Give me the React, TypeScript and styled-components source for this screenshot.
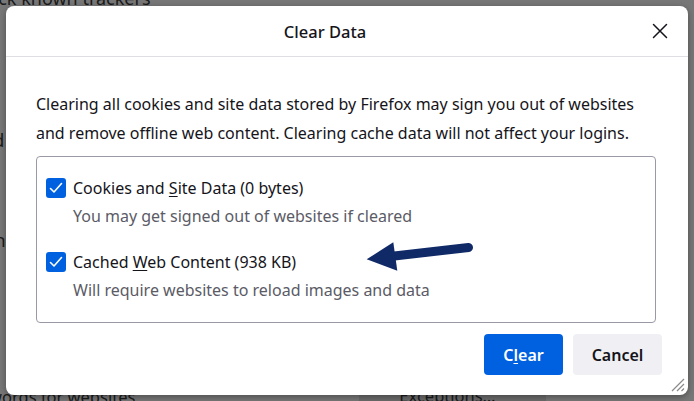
import React from "react";
import styled, { createGlobalStyle } from "styled-components";

const GlobalStyle = createGlobalStyle`
  html, body {
    margin: 0;
    padding: 0;
    width: 694px;
    height: 401px;
    overflow: hidden;
    font-family: "Noto Sans", "Open Sans", Arial, sans-serif;
  }
`;

const Page = styled.div`
  position: relative;
  width: 694px;
  height: 401px;
  overflow: hidden;
  background: #777777;
  color: #1a1a1a;
  font-size: 18px;
`;

const PageContent = styled.div`
  display: flex;
  flex-direction: column;
  margin: -14px 0 0 -29px;
  height: 425px;
`;

const PageLine = styled.div<{ $mt?: number; $ml?: number }>`
  margin-top: ${({ $mt }) => $mt ?? 0}px;
  margin-left: ${({ $ml }) => $ml ?? 0}px;
  line-height: 24px;
`;

const BottomRow = styled.div`
  display: flex;
  align-items: center;
  margin-top: auto;
  margin-left: -17px;
  font-size: 16.5px;
`;

const BottomButton = styled.div`
  margin-left: 224px;
  padding: 0 50px 0 40px;
  background: #6b6b6b;
  line-height: 30px;
`;

const Overlay = styled.div`
  position: absolute;
  inset: 0;
  display: flex;
  align-items: flex-start;
  padding: 6px;
`;

const Dialog = styled.div`
  position: relative;
  width: 682px;
  height: 389px;
  background: #ffffff;
  border-radius: 8px;
  box-shadow: 0 2px 6px rgba(0, 0, 0, 0.35);
  display: flex;
  flex-direction: column;
  color: #15141a;
  font-size: 16px;
`;

const Header = styled.div`
  display: flex;
  align-items: center;
  height: 50px;
  border-bottom: 1px solid #dedee3;
  flex-shrink: 0;
`;

const Title = styled.div`
  flex: 1;
  text-align: center;
  font-weight: 500;
  font-size: 16.5px;
`;

const CloseButton = styled.div`
  width: 32px;
  height: 32px;
  margin-right: 12px;
  display: flex;
  align-items: center;
  justify-content: center;
  color: #15141a;
`;

const Body = styled.div`
  padding: 33px 32px 0 30px;
  display: flex;
  flex-direction: column;
`;

const Intro = styled.p`
  margin: 0;
  line-height: 29px;
`;

const OptionsBox = styled.div`
  margin-top: 8px;
  border: 1px solid #9a9aa6;
  border-radius: 4px;
  height: 167px;
  box-sizing: border-box;
  padding: 21px 10px 0 9px;
  display: flex;
  flex-direction: column;
  gap: 26px;
`;

const Option = styled.div`
  display: flex;
  flex-direction: column;
`;

const OptionRow = styled.label`
  display: flex;
  align-items: center;
  gap: 7px;
  height: 20px;
  line-height: 20px;
`;

const Check = styled.span`
  width: 20px;
  height: 20px;
  border-radius: 3px;
  background: #0061e0;
  display: flex;
  align-items: center;
  justify-content: center;
  flex-shrink: 0;
`;

const Key = styled.span`
  text-decoration: underline;
  text-underline-offset: 2px;
`;

const Description = styled.div`
  margin: 8px 0 0 27px;
  line-height: 20px;
  color: #5b5b66;
`;

const Footer = styled.div`
  display: flex;
  justify-content: flex-end;
  gap: 10px;
  padding: 11px 26px 0 0;
`;

const Button = styled.button<{ $primary?: boolean }>`
  height: 41px;
  width: ${({ $primary }) => ($primary ? 79 : 89)}px;
  padding: 0;
  border: none;
  border-radius: 4px;
  font-family: inherit;
  font-size: 16px;
  font-weight: 600;
  background: ${({ $primary }) => ($primary ? "#0061e0" : "#f0f0f4")};
  color: ${({ $primary }) => ($primary ? "#ffffff" : "#15141a")};
`;

const Grip = styled.svg`
  position: absolute;
  right: 3px;
  bottom: 3px;
`;

const Arrow = styled.svg`
  position: absolute;
  left: 360px;
  top: 236px;
`;

const CheckMark = () => (
  <svg width="14" height="12" viewBox="0 0 14 12">
    <path d="M1.5 6.5 L5 10 L12.5 1.5" fill="none" stroke="#fff" strokeWidth="1.6" strokeLinecap="round" strokeLinejoin="round" />
  </svg>
);

export default function App() {
  return (
    <>
      <GlobalStyle />
      <Page>
        <PageContent>
          <PageLine>Block known trackers</PageLine>
          <PageLine $mt={118} $ml={1}>and</PageLine>
          <PageLine $mt={76} $ml={17}>th</PageLine>
          <BottomRow>
            <span>Passwords for websites</span>
            <BottomButton>Exceptions…</BottomButton>
          </BottomRow>
        </PageContent>
        <Overlay>
          <Dialog>
            <Header>
              <Title>Clear Data</Title>
              <CloseButton>
                <svg width="16" height="16" viewBox="0 0 16 16">
                  <path d="M1.5 1.5 L14.5 14.5 M14.5 1.5 L1.5 14.5" stroke="#15141a" strokeWidth="1.5" strokeLinecap="round" />
                </svg>
              </CloseButton>
            </Header>
            <Body>
              <Intro>
                Clearing all cookies and site data stored by Firefox may sign you out of websites and
                remove offline web content. Clearing cache data will not affect your logins.
              </Intro>
              <OptionsBox>
                <Option>
                  <OptionRow>
                    <Check><CheckMark /></Check>
                    <span>Cookies and <Key>S</Key>ite Data (0 bytes)</span>
                  </OptionRow>
                  <Description>You may get signed out of websites if cleared</Description>
                </Option>
                <Option>
                  <OptionRow>
                    <Check><CheckMark /></Check>
                    <span>Cached <Key>W</Key>eb Content (938 KB)</span>
                  </OptionRow>
                  <Description>Will require websites to reload images and data</Description>
                </Option>
              </OptionsBox>
            </Body>
            <Footer>
              <Button $primary>C<Key>l</Key>ear</Button>
              <Button>Cancel</Button>
            </Footer>
            <Grip width="16" height="16" viewBox="0 0 16 16">
              <path d="M15 3 L3 15 M15 8 L8 15 M15 12.5 L12.5 15" stroke="#8a8a8a" strokeWidth="1.2" />
            </Grip>
          </Dialog>
        </Overlay>
        <Arrow width="120" height="40" viewBox="0 0 120 40">
          <line x1="30" y1="20.5" x2="108.5" y2="11.5" stroke="#102a68" strokeWidth="9" strokeLinecap="round" />
          <polygon points="6.7,23.3 33.3,6.3 37.3,34.7" fill="#102a68" />
        </Arrow>
      </Page>
    </>
  );
}
